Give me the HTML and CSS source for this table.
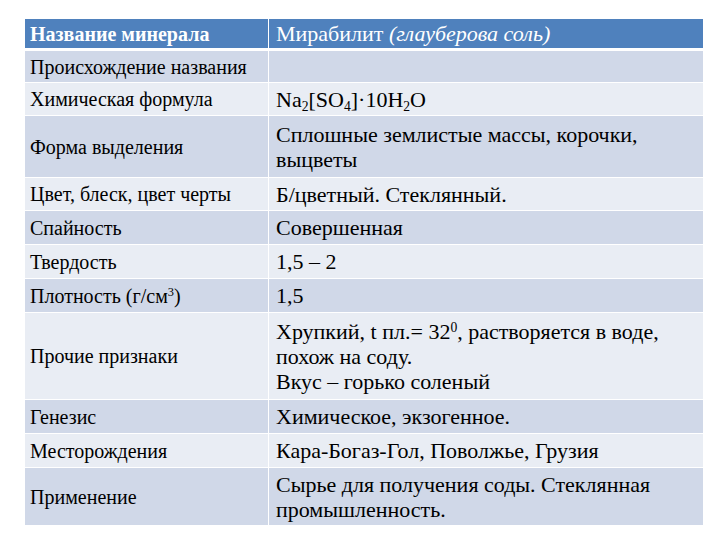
FILE: index.html
```html
<!DOCTYPE html>
<html lang="ru">
<head>
<meta charset="utf-8">
<link rel="stylesheet" href="styles.css">
</head>
<body>
<table class="mineral">
  <colgroup><col class="c1"><col class="c2"></colgroup>
  <tr class="head h31">
    <th>Название минерала</th>
    <td>Мирабилит <i>(глауберова соль)</i></td>
  </tr>
  <tr class="dark h33">
    <th>Происхождение названия</th>
    <td></td>
  </tr>
  <tr class="light h33">
    <th>Химическая формула</th>
    <td>Na<sub>2</sub>[SO<sub>4</sub>]·10H<sub>2</sub>O</td>
  </tr>
  <tr class="dark h62">
    <th>Форма выделения</th>
    <td>Сплошные землистые массы, корочки, выцветы</td>
  </tr>
  <tr class="light h33">
    <th>Цвет, блеск, цвет черты</th>
    <td>Б/цветный. Стеклянный.</td>
  </tr>
  <tr class="dark h34">
    <th>Спайность</th>
    <td>Совершенная</td>
  </tr>
  <tr class="light h34">
    <th>Твердость</th>
    <td>1,5 – 2</td>
  </tr>
  <tr class="dark h34">
    <th>Плотность (г/см<sup>3</sup>)</th>
    <td>1,5</td>
  </tr>
  <tr class="light h87">
    <th>Прочие признаки</th>
    <td>Хрупкий, t пл.= 32<sup>0</sup>, растворяется в воде, похож на соду.<br>Вкус – горько соленый</td>
  </tr>
  <tr class="dark h34">
    <th>Генезис</th>
    <td>Химическое, экзогенное.</td>
  </tr>
  <tr class="light h34">
    <th>Месторождения</th>
    <td>Кара-Богаз-Гол, Поволжье, Грузия</td>
  </tr>
  <tr class="dark h58">
    <th>Применение</th>
    <td>Сырье для получения соды. Стеклянная промышленность.</td>
  </tr>
</table>
</body>
</html>
```
FILE: styles.css
```css
html, body {
  margin: 0;
  padding: 0;
  background: #ffffff;
}
body {
  padding: 18px 0 0 24px;
  font-family: "Liberation Serif", "Times New Roman", serif;
  color: #000000;
}
.mineral {
  border-collapse: collapse;
  width: 679px;
  table-layout: fixed;
}
.c1 { width: 244px; }
.c2 { width: 435px; }
.mineral th, .mineral td {
  font-family: "Liberation Serif", "Times New Roman", serif;
  border: 1px solid #ffffff;
  vertical-align: middle;
  padding: 0 4px 0 5px;
  text-align: left;
  white-space: normal;
}
.mineral th {
  font-weight: normal;
  font-size: 20px;
  line-height: 22px;
}
.mineral td {
  font-size: 22px;
  line-height: 25px;
  padding-left: 7px;
}
.head th, .head td {
  background: #4f81bd;
  color: #ffffff;
}
.head th {
  font-weight: bold;
  font-size: 20px;
}
.head {
  border-bottom: 3px solid #ffffff;
}
.dark th, .dark td { background: #d0d8e8; }
.light th, .light td { background: #e9edf4; }
.h31 { height: 31px; }
.h33 { height: 33px; }
.h34 { height: 34px; }
.h58 { height: 58px; }
.h62 { height: 62px; }
.h87 { height: 87px; }
sub, sup {
  font-size: 0.62em;
  line-height: 0;
}
sub { vertical-align: -0.3em; }
sup { vertical-align: 0.55em; }
```
